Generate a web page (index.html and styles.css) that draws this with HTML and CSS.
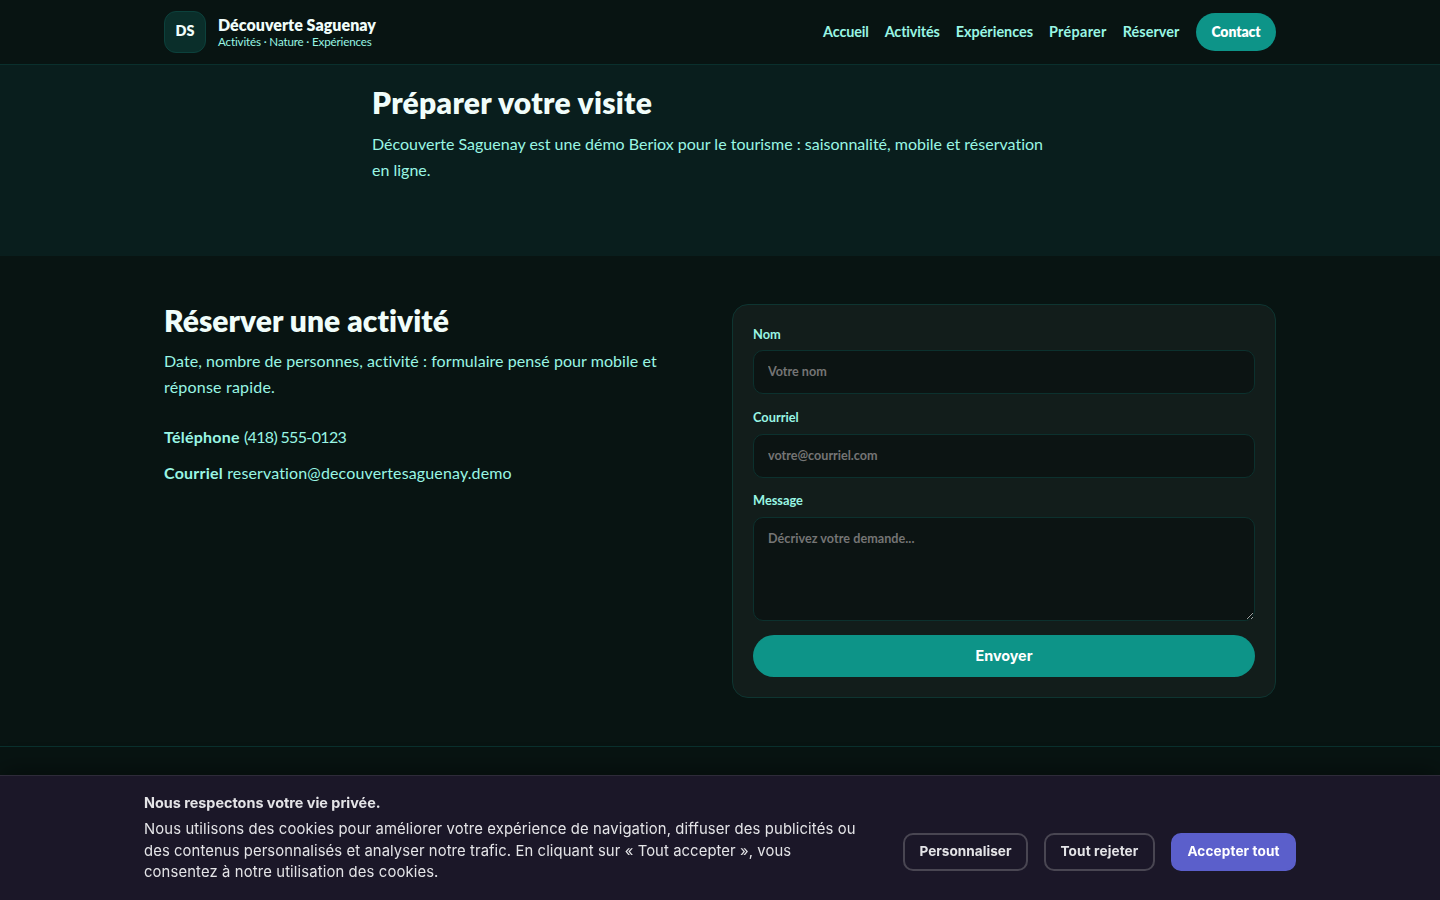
FILE: index.html
```html
<!DOCTYPE html>
<html lang="fr">
<head>
<meta charset="utf-8">
<title>Découverte Saguenay</title>
<link rel="stylesheet" href="styles.css">
</head>
<body>
<header class="site-header">
  <div class="wrap header-row">
    <div class="brand">
      <div class="brand-mark">DS</div>
      <div class="brand-text">
        <span class="brand-name">Découverte Saguenay</span>
        <span class="brand-tag">Activités · Nature · Expériences</span>
      </div>
    </div>
    <nav class="nav">
      <a class="nav-tight">Accueil</a>
      <a class="nav-tight">Activités</a>
      <a>Expériences</a>
      <a class="nav-wide">Préparer</a>
      <a class="nav-last">Réserver</a>
      <a class="nav-cta">Contact</a>
    </nav>
  </div>
</header>
<section class="prepare">
  <div class="narrow">
    <h2 class="title-wide">Préparer votre visite</h2>
    <p>Découverte Saguenay est une démo Beriox pour le tourisme : saisonnalité, mobile et réservation<br>en ligne.</p>
  </div>
</section>
<section class="reserve">
  <div class="wrap columns">
    <div class="info">
      <h2>Réserver une activité</h2>
      <p class="lead">Date, nombre de personnes, activité : formulaire pensé pour mobile et<br><span class="lead-end">réponse rapide.</span></p>
      <div class="contact-list">
        <p><strong>Téléphone</strong> <span class="tel">(418) 555-0123</span></p>
        <p><strong>Courriel</strong> <span class="mail">reservation@decouvertesaguenay.demo</span></p>
      </div>
    </div>
    <form class="card">
      <label><span>Nom</span><input type="text" placeholder="Votre nom"></label>
      <label><span>Courriel</span><input type="email" placeholder="votre@courriel.com"></label>
      <label><span>Message</span><textarea placeholder="Décrivez votre demande..."></textarea></label>
      <button class="send" type="button">Envoyer</button>
    </form>
  </div>
</section>
<footer class="footer"></footer>
<aside class="consent">
  <div class="consent-row">
    <div class="consent-text">
      <strong>Nous respectons votre vie privée.</strong>
      <p>Nous utilisons des cookies pour améliorer votre expérience de navigation, diffuser des publicités ou<br><span class="consent-mid">des contenus personnalisés et analyser notre trafic. En cliquant sur « Tout accepter », vous</span><br>consentez à notre utilisation des cookies.</p>
    </div>
    <div class="consent-actions">
      <button type="button" class="customize">Personnaliser</button>
      <button type="button" class="reject">Tout rejeter</button>
      <button type="button" class="accept">Accepter tout</button>
    </div>
  </div>
</aside>
</body>
</html>
```
FILE: styles.css
```css
* { box-sizing: border-box; }

body {
  margin: 0;
  height: 900px;
  overflow: hidden;
  background: #081412;
  color: #99f6e4;
  font: 400 16px/25.6px Lato, sans-serif;
  font-variant-ligatures: none;
}

h2, p { margin: 0; white-space: nowrap; }

h2 {
  margin-bottom: 10px;
  color: #f0fdfa;
  font-size: 30px;
  line-height: 36px;
  font-weight: 800;
  letter-spacing: .04px;
}

.wrap { width: 1112px; margin: 0 auto; }

/* Header */
.site-header { height: 65px; border-bottom: 1px solid #0a302d; }
.header-row { height: 64px; display: flex; align-items: center; justify-content: space-between; }
.brand { display: flex; align-items: center; gap: 12px; }
.brand-mark {
  width: 42px;
  height: 42px;
  padding-bottom: 2px;
  display: flex;
  align-items: center;
  justify-content: center;
  border: 1px solid #0c413c;
  border-radius: 12px;
  background: #0a2e2a;
  color: #f0fdfa;
  font-size: 14.4px;
  font-weight: 800;
}
.brand-text { display: flex; flex-direction: column; align-items: flex-start; white-space: nowrap; }
.brand-name { color: #f0fdfa; font-weight: 800; font-size: 16px; line-height: 20px; letter-spacing: .036px; }
.brand-tag { font-size: 11.6px; line-height: 14px; letter-spacing: -.15px; }
.nav { display: flex; align-items: center; gap: 16px; font-size: 14.4px; font-weight: 700; }
.nav-tight { letter-spacing: -.14px; }
.nav-wide { letter-spacing: .3px; }
.nav-last { letter-spacing: .05px; margin-right: .6px; }
.nav-cta {
  width: 80px;
  height: 38px;
  display: flex;
  align-items: center;
  justify-content: center;
  border-radius: 19px;
  background: #0d9488;
  color: #fff;
  font-size: 14px;
  font-weight: 800;
  letter-spacing: -.1px;
}

/* Intro */
.prepare { height: 191px; padding-top: 19px; background: #091e1d; }
.narrow { width: 696px; margin: 0 auto; }
.prepare p { padding-top: 1px; }
h2.title-wide { letter-spacing: .28px; }

/* Booking */
.reserve { padding: 48px 0; }
.columns { display: grid; grid-template-columns: 1fr 544px; gap: 24px; }
.info { margin-top: -2px; }
.lead { letter-spacing: .056px; }
.lead-end { letter-spacing: .2px; }
.contact-list { margin-top: 25px; display: grid; gap: 10px; }
.contact-list strong { letter-spacing: .24px; }
.tel { letter-spacing: -.65px; }
.mail { letter-spacing: .14px; }
.card { height: 394px; padding: 20px; border: 1px solid #0e3531; border-radius: 16px; background: #121d1b; }
label { display: block; margin-bottom: 14px; font-size: 12.8px; font-weight: 700; }
label span { display: block; height: 25px; line-height: 18px; }
label:nth-child(n+2) span { height: 26px; }
label:nth-child(3) span { height: 25px; line-height: 17px; }
input, textarea {
  display: block;
  width: 100%;
  height: 44px;
  margin: 0;
  padding: 12px 14px 14px;
  border: 1px solid #0c312e;
  border-radius: 10px;
  background: #0c1413;
  color: #f0fdfa;
  font: 700 12.6px/18px Lato, sans-serif;
}
textarea { height: 104px; letter-spacing: .05px; }
.send {
  display: block;
  width: 100%;
  height: 42px;
  padding: 0 0 1px;
  border: 0;
  border-radius: 21px;
  background: #0d9488;
  color: #fff;
  font: 700 14.4px Inter, sans-serif;
  letter-spacing: -.05px;
}
.footer { border-top: 1px solid #0a302d; }

/* Cookie consent */
.consent {
  position: fixed;
  left: 0;
  right: 0;
  bottom: 0;
  height: 125px;
  border-top: 1px solid #2e2b39;
  background: #1b1728;
  box-shadow: 0 -4px 24px rgba(0, 0, 0, .4);
  color: #e4e4e7;
  font: 14.4px/21.6px Inter, sans-serif;
}
.consent-row { width: 1152px; margin: 0 auto; padding-top: 16px; display: flex; justify-content: space-between; }
.consent-text strong { display: block; margin-bottom: 5.4px; }
.consent-text p { font-size: 14.8px; letter-spacing: .14px; }
.consent-mid { letter-spacing: .1px; }
.consent-actions { display: flex; gap: 16px; padding-top: 41px; }
.consent-actions button {
  height: 38px;
  padding: 0 0 2px;
  border: 2px solid #494652;
  border-radius: 10px;
  background: transparent;
  color: #e4e4e7;
  font: 700 13.6px Inter, sans-serif;
  letter-spacing: .03px;
}
.consent-actions .customize { width: 125px; }
.consent-actions .reject { width: 111px; letter-spacing: .12px; }
.consent-actions .accept { width: 125px; border-color: #5b5fcb; background: #5b5fcb; color: #fff; letter-spacing: .1px; }
```
